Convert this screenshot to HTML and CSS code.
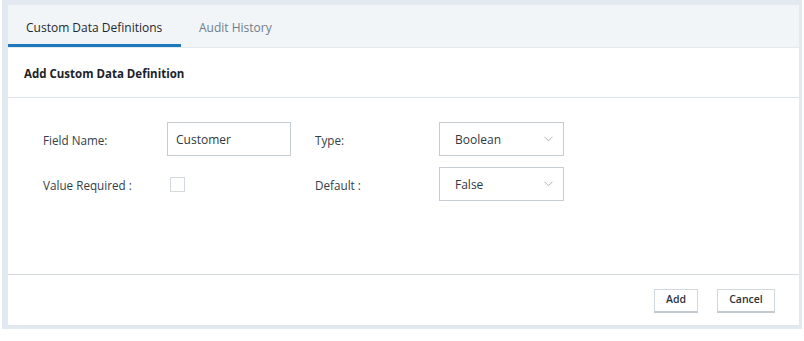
FILE: index.html
```html
<!DOCTYPE html>
<html>
<head>
<meta charset="utf-8">
<link rel="stylesheet" href="styles.css">
</head>
<body>
<div class="frame">
  <div class="panel">
    <div class="tabs">
      <div class="tab active">Custom Data Definitions</div>
      <div class="tab">Audit History</div>
    </div>
    <div class="header">Add Custom Data Definition</div>
    <div class="body">
      <div class="grid">
        <div class="label">Field Name:</div>
        <div class="cell"><div class="input">Customer</div></div>
        <div class="label">Type:</div>
        <div class="cell"><div class="select"><span>Boolean</span><svg class="chev" width="9" height="6" viewBox="0 0 9 6"><path d="M0.5 0.8 L4.5 4.8 L8.5 0.8" fill="none" stroke="#a7b0b8" stroke-width="1"/></svg></div></div>
        <div class="label">Value Required :</div>
        <div class="cell"><div class="checkbox"></div></div>
        <div class="label">Default :</div>
        <div class="cell"><div class="select"><span>False</span><svg class="chev" width="9" height="6" viewBox="0 0 9 6"><path d="M0.5 0.8 L4.5 4.8 L8.5 0.8" fill="none" stroke="#a7b0b8" stroke-width="1"/></svg></div></div>
      </div>
    </div>
    <div class="footer">
      <button class="btn add">Add</button>
      <button class="btn">Cancel</button>
    </div>
  </div>
</div>
</body>
</html>
```

FILE: styles.css
```css
html, body {
  margin: 0;
  padding: 0;
  background: #ffffff;
}
body {
  font-family: "Open Sans", "Noto Sans", sans-serif;
  color: #333c45;
}
.frame {
  margin-left: 2px;
  width: 800px;
  height: 329px;
  box-sizing: border-box;
  padding: 5px 3px 3px 6px;
  background: #e2e9f1;
}
.panel {
  background: #ffffff;
  height: 321px;
  display: flex;
  flex-direction: column;
}
.tabs {
  height: 42px;
  background: #f1f5f8;
  border-bottom: 1px solid #e4eaf0;
  display: flex;
}
.tab {
  font-size: 12px;
  color: #6f7d8a;
  padding: 0 18px;
  line-height: 46px;
  box-sizing: border-box;
  height: 42px;
  white-space: nowrap;
  overflow: hidden;
}
.tab.active {
  width: 173px;
  color: #1f2830;
  border-bottom: 3px solid #1f77bc;
}
.header {
  height: 49px;
  border-bottom: 1px solid #dde4ea;
  padding-left: 16px;
  font-size: 11.5px;
  font-weight: 700;
  color: #1b2229;
  line-height: 51px;
  white-space: nowrap;
}
.body {
  flex: 1;
  padding: 24px 0 0 35px;
  border-bottom: 1px solid #d3dadd;
}
.grid {
  display: grid;
  grid-template-columns: 124px 148px 124px 125px;
  grid-auto-rows: 34px;
  row-gap: 11px;
  align-items: center;
}
.label {
  font-size: 11.7px;
  color: #343e48;
  padding-top: 2px;
  white-space: nowrap;
}
.cell {
  display: flex;
  align-items: center;
  height: 34px;
}
.input, .select {
  box-sizing: border-box;
  height: 34px;
  border: 1px solid #c5ccd3;
  font-size: 12px;
  color: #2f3841;
  padding-left: 8px;
  display: flex;
  align-items: center;
}
.input {
  width: 124px;
}
.select {
  width: 125px;
  justify-content: space-between;
  padding-left: 15px;
  padding-right: 10px;
}
.chev {
  display: block;
}
.checkbox {
  width: 13px;
  height: 13px;
  margin-left: 3px;
  border: 1px solid #d3d9df;
  background: #fff;
}
.footer {
  height: 51px;
  box-sizing: border-box;
  border-bottom: 1px solid #dfe6ec;
  display: flex;
  justify-content: flex-end;
  align-items: flex-start;
  padding: 14px 24px 0 0;
  gap: 19px;
}
.btn {
  font-family: "Open Sans", "Noto Sans", sans-serif;
  font-size: 10.5px;
  font-weight: 600;
  color: #2a333c;
  background: #ffffff;
  border: 1px solid #d0d7dd;
  border-bottom: 2px solid #c2c9cf;
  height: 24px;
  width: 58px;
  padding: 0 0 4px 0;
  margin: 0;
}
.btn.add {
  width: 44px;
}
```
